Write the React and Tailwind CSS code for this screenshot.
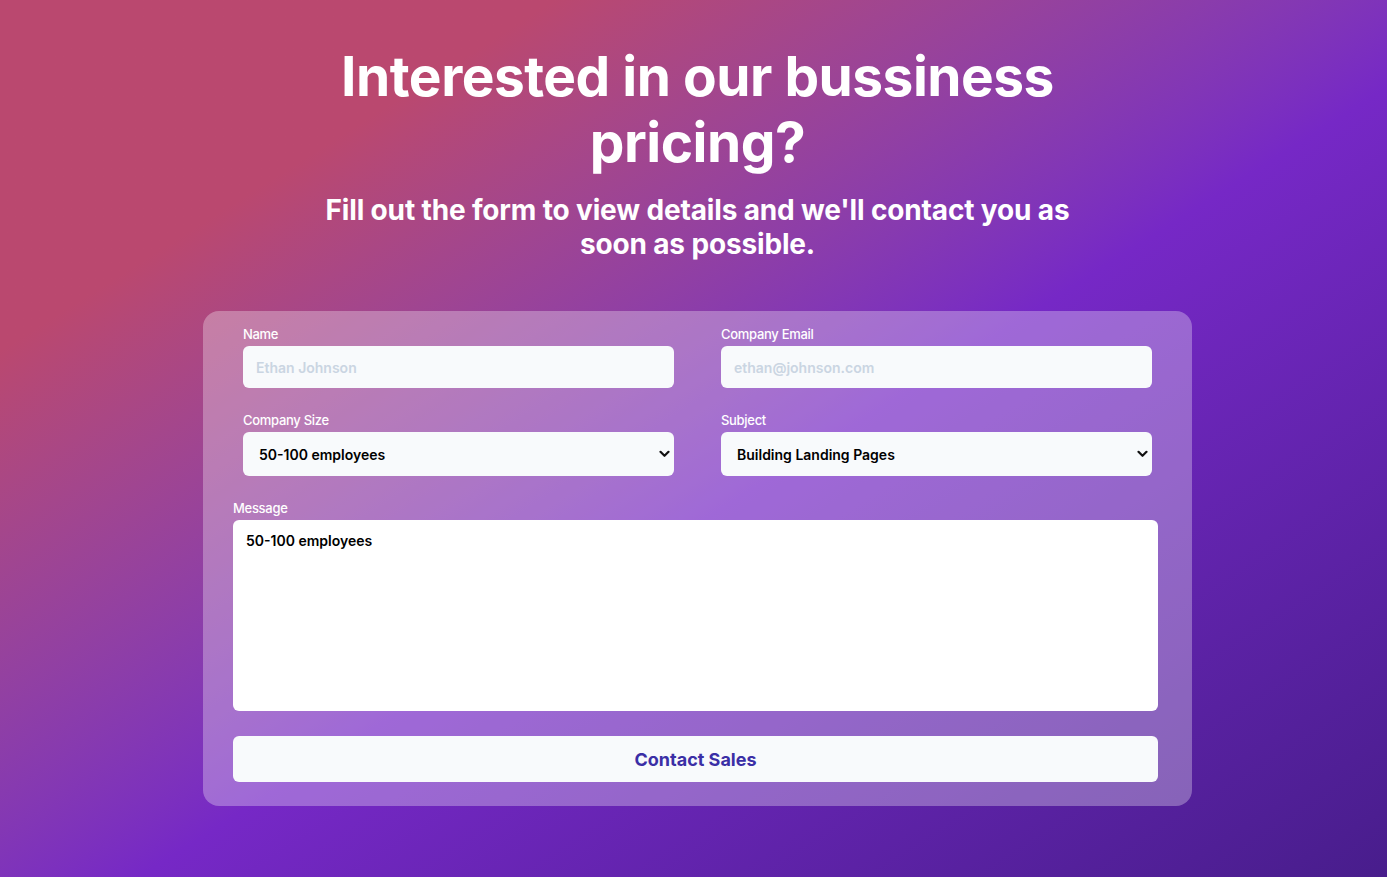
import React from "react";

const font = { fontFamily: "Inter, 'Noto Sans', sans-serif" };

function Label({ children, className = "" }) {
  return (
    <label className={"block text-[13px] leading-[18px] font-medium text-white tracking-[-0.3px] " + className}>
      {children}
    </label>
  );
}

function Chevron() {
  return (
    <svg className="pointer-events-none absolute right-[4px] top-1/2 -translate-y-1/2" width="11" height="8" viewBox="0 0 11 8" fill="none">
      <path d="M1.5 1.8 L5.5 5.8 L9.5 1.8" stroke="#111" strokeWidth="2.2" strokeLinecap="round" strokeLinejoin="round" />
    </svg>
  );
}

export default function App() {
  return (
    <div
      className="min-h-[877px] w-full bg-linear-to-br from-[#ba486f] from-20% via-[#7628c6] via-55% to-[#481d8c] pl-[8px]"
      style={font}
    >
      <div className="flex flex-col items-center pt-[43px]">
        <h1 className="w-[760px] text-center text-[55px] leading-[66px] font-bold text-white tracking-[-0.5px]">
          Interested in our bussiness pricing?
        </h1>
        <p className="mt-[18px] w-[780px] text-center text-[28px] leading-[34px] font-bold text-white tracking-[-0.15px]">
          Fill out the form to view details and we'll contact you as soon as possible.
        </p>

        <form className="mt-[50px] w-[989px] rounded-2xl bg-white/30 pl-[30px] pr-[34px] pt-[14px] pb-[24px]">
          <div className="grid grid-cols-2 gap-x-[47px] gap-y-[23px] pl-[10px] pr-[6px]">
            <div>
              <Label>Name</Label>
              <input
                className="mt-[3px] h-[42px] w-full rounded-md bg-slate-50 px-[13px] text-[14px] font-semibold text-slate-800 placeholder:text-slate-300 outline-none"
                placeholder="Ethan Johnson"
              />
            </div>
            <div>
              <Label>Company Email</Label>
              <input
                className="mt-[3px] h-[42px] w-full rounded-md bg-slate-50 px-[13px] text-[14px] font-semibold text-slate-800 placeholder:text-slate-300 outline-none"
                placeholder="ethan@johnson.com"
              />
            </div>
            <div>
              <Label>Company Size</Label>
              <div className="relative mt-[3px]">
                <select className="h-[44px] w-full appearance-none rounded-md bg-slate-50 px-[16px] text-[14px] font-semibold text-black outline-none" defaultValue="50-100 employees">
                  <option>1-10 employees</option>
                  <option>10-50 employees</option>
                  <option>50-100 employees</option>
                  <option>100+ employees</option>
                </select>
                <Chevron />
              </div>
            </div>
            <div>
              <Label>Subject</Label>
              <div className="relative mt-[3px]">
                <select className="h-[44px] w-full appearance-none rounded-md bg-slate-50 px-[16px] text-[14px] font-semibold text-black outline-none" defaultValue="Building Landing Pages">
                  <option>Building Landing Pages</option>
                  <option>Pricing</option>
                  <option>Other</option>
                </select>
                <Chevron />
              </div>
            </div>
          </div>

          <div className="mt-[23px]">
            <Label>Message</Label>
            <textarea
              className="mt-[3px] block h-[191px] w-full resize-none rounded-md bg-white px-[13px] py-[10px] text-[14px] font-semibold text-black outline-none"
              defaultValue="50-100 employees"
            />
          </div>

          <button
            type="button"
            className="mt-[25px] flex h-[46px] w-full items-center justify-center rounded-md bg-slate-50 text-[18px] font-bold text-[#3b2fa6]"
          >
            Contact Sales
          </button>
        </form>
      </div>
    </div>
  );
}
